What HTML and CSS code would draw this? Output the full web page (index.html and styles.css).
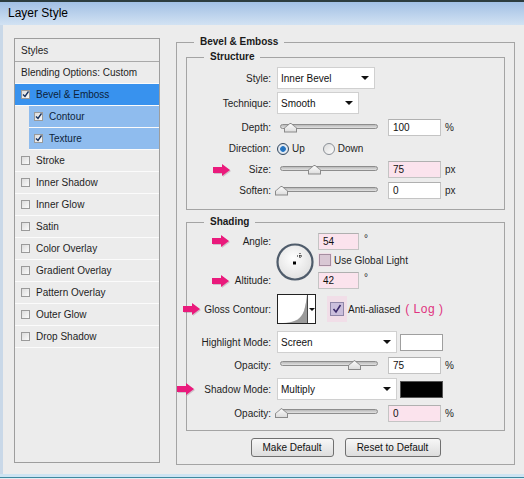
FILE: index.html
```html
<!DOCTYPE html>
<html lang="en">
<head>
    <meta charset="UTF-8">
    <title>Layer Style</title>
    <link rel="stylesheet" href="styles.css">
</head>
<body>
    <div class="window">
        <div class="titlebar">Layer Style</div>

        <div class="window-body">
            <ul class="styles-list">
                <li class="list-head">Styles</li>
                <li>Blending Options: Custom</li>
                <li class="selected"><span class="check"><svg width="7" height="7" viewBox="0 0 7 7"><path d="M1 3.5 L3 5.5 L6.5 0.5" fill="none" stroke="#14305e" stroke-width="1.4"/></svg></span>Bevel &amp; Emboss</li>
                <li class="sub"><span class="check"><svg width="7" height="7" viewBox="0 0 7 7"><path d="M1 3.5 L3 5.5 L6.5 0.5" fill="none" stroke="#14305e" stroke-width="1.4"/></svg></span>Contour</li>
                <li class="sub"><span class="check"><svg width="7" height="7" viewBox="0 0 7 7"><path d="M1 3.5 L3 5.5 L6.5 0.5" fill="none" stroke="#14305e" stroke-width="1.4"/></svg></span>Texture</li>
                <li><span class="check"></span>Stroke</li>
                <li><span class="check"></span>Inner Shadow</li>
                <li><span class="check"></span>Inner Glow</li>
                <li><span class="check"></span>Satin</li>
                <li><span class="check"></span>Color Overlay</li>
                <li><span class="check"></span>Gradient Overlay</li>
                <li><span class="check"></span>Pattern Overlay</li>
                <li><span class="check"></span>Outer Glow</li>
                <li><span class="check"></span>Drop Shadow</li>
            </ul>

            <fieldset class="group outer">
                <legend>Bevel &amp; Emboss</legend>

                <fieldset class="group inner structure">
                    <legend>Structure</legend>

                    <div class="row tall">
                        <span class="lbl">Style:</span>
                        <div class="dropdown" style="width:98px">Inner Bevel<span class="caret"></span></div>
                    </div>
                    <div class="row tall gap3">
                        <span class="lbl">Technique:</span>
                        <div class="dropdown" style="width:82px">Smooth<span class="caret"></span></div>
                    </div>
                    <div class="row gap3">
                        <span class="lbl">Depth:</span>
                        <div class="slider"><span class="track"></span><span class="thumb" style="left:6px"></span></div>
                        <span class="num">100</span><span class="unit">%</span>
                    </div>
                    <div class="row">
                        <span class="lbl">Direction:</span>
                        <span class="radio on"></span><span class="radio-text">Up</span>
                        <span class="radio down"></span><span class="radio-text">Down</span>
                    </div>
                    <div class="row">
                        <svg class="arrow" style="left:26px" width="18" height="12" viewBox="0 0 18 12"><polygon points="0,3 9,3 9,0 17,6 9,12 9,9 0,9"/></svg>
                        <span class="lbl">Size:</span>
                        <div class="slider"><span class="track"></span><span class="thumb" style="left:30px"></span></div>
                        <span class="num pink">75</span><span class="unit">px</span>
                    </div>
                    <div class="row">
                        <span class="lbl">Soften:</span>
                        <div class="slider"><span class="track"></span><span class="thumb" style="left:-3px"></span></div>
                        <span class="num">0</span><span class="unit">px</span>
                    </div>
                </fieldset>

                <fieldset class="group inner shading">
                    <legend>Shading</legend>

                    <div class="angle-block">
                        <span class="lbl cell-angle">
                            <svg class="arrow" style="left:25px" width="18" height="12" viewBox="0 0 18 12"><polygon points="0,3 9,3 9,0 17,6 9,12 9,9 0,9"/></svg>
                            Angle:
                        </span>
                        <div class="dial">
                            <svg width="38" height="38" viewBox="0 0 38 38">
                                <defs>
                                    <radialGradient id="dialFill" cx="45%" cy="40%" r="60%">
                                        <stop offset="0" stop-color="#ffffff"/>
                                        <stop offset="1" stop-color="#e0e0e0"/>
                                    </radialGradient>
                                </defs>
                                <circle cx="19" cy="19" r="17.5" fill="url(#dialFill)" stroke="#4f5c6b" stroke-width="2.2"/>
                                <rect x="17" y="18.5" width="3" height="3" fill="#000"/>
                                <path d="M24 10 V16 M21 13 H27" stroke="#111" stroke-width="1" stroke-dasharray="1 1"/>
                                <rect x="23.5" y="12.5" width="1" height="1" fill="#000"/>
                            </svg>
                        </div>
                        <div class="cell-val">
                            <span class="num small pink">54</span><span class="deg">°</span>
                        </div>
                        <div class="cell-light">
                            <span class="box-check"></span>Use Global Light
                        </div>
                        <span class="lbl cell-alt">
                            <svg class="arrow" style="left:25px" width="18" height="12" viewBox="0 0 18 12"><polygon points="0,3 9,3 9,0 17,6 9,12 9,9 0,9"/></svg>
                            Altitude:
                        </span>
                        <div class="cell-val2">
                            <span class="num small pink">42</span><span class="deg">°</span>
                        </div>
                    </div>

                    <div class="row contour-row">
                        <svg class="arrow" style="left:-4px" width="18" height="12" viewBox="0 0 18 12"><polygon points="0,3 9,3 9,0 17,6 9,12 9,9 0,9"/></svg>
                        <span class="lbl">Gloss Contour:</span>
                        <div class="contour">
                            <svg width="29" height="28" viewBox="0 0 29 28">
                                <path d="M0 28 C14 28 22 26 26 16 C27.5 11 28.5 5 29 0 L29 28 Z" fill="#d2d2d2"/>
                                <path d="M8 28 C18 27 23 24 26 16 C27.5 11 28.5 5 29 0 L29 28 Z" fill="#9a9a9a"/>
                            </svg>
                            <span class="contour-drop"><span class="caret"></span></span>
                        </div>
                        <span class="halo"><span class="box-check checked"><svg width="10" height="10" viewBox="0 0 10 10"><path d="M1.5 5 L4 8 L8.5 1" fill="none" stroke="#3b2a6a" stroke-width="1.6"/></svg></span></span>
                        <span class="aa-text">Anti-aliased</span>
                        <span class="note">( Log )</span>
                    </div>

                    <div class="row tall mode-row">
                        <span class="lbl">Highlight Mode:</span>
                        <div class="dropdown" style="width:120px">Screen<span class="caret"></span></div>
                        <span class="swatch"></span>
                    </div>
                    <div class="row r24">
                        <span class="lbl">Opacity:</span>
                        <div class="slider"><span class="track"></span><span class="thumb" style="left:70px"></span></div>
                        <span class="num">75</span><span class="unit">%</span>
                    </div>
                    <div class="row r24">
                        <svg class="arrow" style="left:-10px" width="18" height="12" viewBox="0 0 18 12"><polygon points="0,3 9,3 9,0 17,6 9,12 9,9 0,9"/></svg>
                        <span class="lbl">Shadow Mode:</span>
                        <div class="dropdown" style="width:120px">Multiply<span class="caret"></span></div>
                        <span class="swatch black"></span>
                    </div>
                    <div class="row r24">
                        <span class="lbl">Opacity:</span>
                        <div class="slider"><span class="track"></span><span class="thumb" style="left:-3px"></span></div>
                        <span class="num pink">0</span><span class="unit">%</span>
                    </div>
                </fieldset>

                <div class="buttons">
                    <button class="btn" style="width:83px">Make Default</button>
                    <button class="btn" style="width:96px">Reset to Default</button>
                </div>
            </fieldset>
        </div>

        <div class="window-foot"></div>
    </div>
</body>
</html>
```

FILE: styles.css
```css
* {
    box-sizing: border-box;
}
body {
    margin: 0;
    font-family: "Liberation Sans", Arial, sans-serif;
    font-size: 10px;
    color: #1e1e1e;
    background-color: #ececec;
}
.window {
    width: 524px;
    height: 479px;
    overflow: hidden;
    background-color: #ececec;
}
.titlebar {
    height: 25px;
    border-top: 2px solid #2c3c3e;
    background: linear-gradient(#a2c0e4, #d2e2f3);
    padding-left: 8px;
    font-size: 12px;
    line-height: 22px;
    color: #000;
}
.window-body {
    display: flex;
    align-items: flex-start;
    height: 449px;
    border-left: 3px solid #c9d8e8;
    padding: 13px 0 0 11px;
}
.window-foot {
    height: 5px;
    background: linear-gradient(#cde4f2 0, #cde4f2 3px, #3f889f 3px, #3f889f 4px, #e4ecf2 4px);
}

/* left list */
.styles-list {
    list-style: none;
    margin: 0;
    padding: 0;
    width: 146px;
    height: 425px;
    flex: none;
    border: 1px solid #9d9d9d;
}
.styles-list li {
    height: 22px;
    display: flex;
    align-items: center;
    padding-left: 6px;
    border-bottom: 1px solid #fbfbfb;
}
.styles-list .list-head {
    height: 23px;
    border-bottom-color: #a9a9a9;
}
.styles-list .selected {
    background-color: #3892ee;
    color: #0d1f3a;
}
.styles-list .sub {
    margin-left: 14px;
    padding-left: 5px;
    background-color: #8fbcee;
    color: #0d1f3a;
}
.check {
    width: 9px;
    height: 9px;
    margin-right: 6px;
    border: 1px solid #9a9a9a;
    background: linear-gradient(135deg, #dcdcdc, #fafafa);
    display: flex;
    align-items: center;
    justify-content: center;
}

/* group boxes */
.group {
    margin: 0;
    padding: 0;
    min-width: 0;
    border: 1px solid #a4a4a4;
}
.group legend {
    font-weight: bold;
    line-height: 12px;
    padding: 0 6px;
    color: #1a1a1a;
}
.outer {
    width: 339px;
    margin: -2px 0 0 16px;
    padding: 3px 9px 7px;
}
.outer > legend {
    margin-left: 8px;
}
.inner > legend {
    margin-left: 17px;
}
.structure {
    padding: 4px 0 8px;
}
.shading {
    margin-top: 6px;
    padding: 4px 0 5px;
}

/* rows */
.row {
    position: relative;
    display: flex;
    align-items: center;
    height: 21px;
}
.row.tall {
    height: 22px;
}
.row.gap3 {
    margin-top: 3px;
}
.row.r24 {
    height: 24px;
}
.lbl {
    width: 84px;
    margin-right: 6px;
    text-align: right;
    flex: none;
}
.arrow {
    position: absolute;
    top: 50%;
    margin-top: -6px;
    fill: #ea1a7c;
    filter: drop-shadow(1px 1px 0 rgba(120, 60, 90, 0.25));
}

.dropdown {
    height: 22px;
    display: flex;
    align-items: center;
    justify-content: space-between;
    padding: 0 5px 0 3px;
    background-color: #fff;
    border: 1px solid #d0d0d0;
    color: #111;
}
.caret {
    width: 0;
    height: 0;
    border-left: 4px solid transparent;
    border-right: 4px solid transparent;
    border-top: 4px solid #111;
}

.slider {
    position: relative;
    width: 102px;
    height: 14px;
    margin-left: 1px;
    flex: none;
}
.track {
    position: absolute;
    left: 2px;
    top: 3px;
    width: 98px;
    height: 5px;
    border: 1px solid #8d8d8d;
    border-radius: 3px;
    background: linear-gradient(#b9b9b9, #e2e2e2);
}
.thumb {
    position: absolute;
    top: 2px;
    width: 13px;
    height: 10px;
    background: #8a8a8a;
    clip-path: polygon(50% 0, 100% 55%, 100% 100%, 0 100%, 0 55%);
}
.thumb::before {
    content: "";
    position: absolute;
    inset: 1px;
    background: linear-gradient(#fbfbfb, #dcdcdc);
    clip-path: polygon(50% 0, 100% 55%, 100% 100%, 0 100%, 0 55%);
}

.num {
    width: 53px;
    height: 17px;
    margin-left: 8px;
    padding-left: 4px;
    line-height: 15px;
    background-color: #fff;
    border: 1px solid #c4c4c4;
    border-top-color: #b0b0b0;
    color: #111;
    flex: none;
}
.num.pink {
    background-color: #fbe3ed;
}
.num.small {
    width: 41px;
    margin-left: 0;
}
.unit {
    margin-left: 4px;
}
.deg {
    margin-left: 5px;
    position: relative;
    top: -3px;
}

.radio {
    width: 12px;
    height: 12px;
    border-radius: 50%;
    border: 1px solid #8a8f96;
    background: linear-gradient(135deg, #dcdcdc, #fdfdfd);
    flex: none;
}
.radio.on {
    border-color: #33485f;
    background: radial-gradient(circle, #1f6db8 0, #2a78c4 2.5px, #e8eef5 3.2px, #cfd8e2 6px);
}
.radio.down {
    margin-left: 18px;
}
.radio-text {
    margin-left: 3px;
}

/* angle / altitude */
.angle-block {
    display: grid;
    grid-template-columns: 84px 47px auto;
    grid-template-rows: 18px 20px 21px;
    align-items: center;
}
.cell-angle {
    position: relative;
    grid-column: 1;
    grid-row: 1;
    margin-right: 0;
}
.cell-alt {
    position: relative;
    grid-column: 1;
    grid-row: 3;
    margin-right: 0;
}
.dial {
    grid-column: 2;
    grid-row: 1 / 4;
    justify-self: center;
    width: 38px;
    height: 38px;
}
.dial svg {
    display: block;
}
.cell-val {
    grid-column: 3;
    grid-row: 1;
    display: flex;
    align-items: center;
}
.cell-val2 {
    grid-column: 3;
    grid-row: 3;
    display: flex;
    align-items: center;
}
.cell-light {
    grid-column: 3;
    grid-row: 2;
    display: flex;
    align-items: center;
}
.box-check {
    width: 12px;
    height: 12px;
    margin: 0 3px 0 1px;
    border: 1px solid #a58ea0;
    background-color: #d9c7d4;
    box-shadow: 0 0 0 1px #f1dfe8;
    display: flex;
    align-items: center;
    justify-content: center;
}

/* gloss contour */
.contour-row {
    height: 30px;
    margin-top: 3px;
}
.contour {
    display: flex;
    width: 39px;
    height: 30px;
    border: 1px solid #222;
    background-color: #fff;
}
.contour svg {
    display: block;
}
.contour-drop {
    width: 8px;
    border-left: 1px solid #444;
    display: flex;
    align-items: center;
    justify-content: center;
}
.contour-drop .caret {
    border-left-width: 3px;
    border-right-width: 3px;
    border-top-width: 3px;
}
.halo {
    margin-left: 11px;
    padding: 6px 3px;
    background-color: #f1dee8;
}
.halo .box-check {
    margin: 0;
    width: 14px;
    height: 14px;
    background-color: #cbbfdc;
    border-color: #8f86a8;
    box-shadow: none;
}
.aa-text {
    margin-left: 1px;
}
.note {
    margin-left: 5px;
    font-size: 12px;
    color: #e0337f;
    letter-spacing: 0.5px;
}

.mode-row {
    margin-top: 7px;
}
.swatch {
    width: 43px;
    height: 17px;
    margin-left: 3px;
    background-color: #fff;
    border: 1px solid #9f9f9f;
}
.swatch.black {
    background-color: #000;
    border-color: #555;
}

.buttons {
    display: flex;
    justify-content: center;
    gap: 11px;
    margin-top: 7px;
}
.btn {
    height: 19px;
    padding: 0;
    font-family: inherit;
    font-size: 10px;
    color: #111;
    border: 1px solid #707070;
    border-radius: 3px;
    background: linear-gradient(#f7f7f7, #dddddd);
}
```
